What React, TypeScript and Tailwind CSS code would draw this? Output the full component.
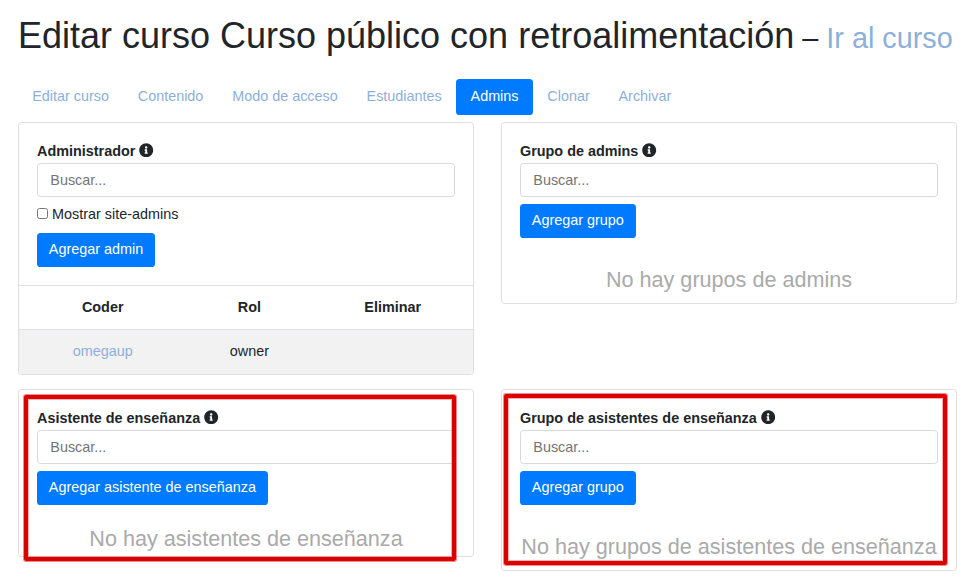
import type { ReactNode } from 'react';
import { FaInfoCircle } from 'react-icons/fa';

const tabs = ['Editar curso', 'Contenido', 'Modo de acceso', 'Estudiantes', 'Admins', 'Clonar', 'Archivar'];

function Card({ children, className = '' }: { children: ReactNode; className?: string }) {
  return (
    <section className={`relative rounded-[3.6px] border border-[#dfdfdf] bg-white ${className}`}>{children}</section>
  );
}

function SearchField({ label }: { label: string }) {
  return (
    <label className="block">
      <span className="flex h-[21.6px] items-center font-bold">
        {label}
        <FaInfoCircle className="relative -top-[1.6px] ml-1 size-[14.4px]" />
      </span>
      <input
        type="text"
        placeholder="Buscar..."
        className="block h-[34px] w-full rounded-[3.6px] border border-[#d9d9d9] bg-white px-[12.3px] placeholder:text-[#757575]"
      />
    </label>
  );
}

function AddButton({ children }: { children: ReactNode }) {
  return (
    <button type="button" className="h-[34px] rounded-[3.6px] bg-[#007bff] px-[11.8px] text-white">
      {children}
    </button>
  );
}

function EmptyNote({ children, className = '' }: { children: ReactNode; className?: string }) {
  return (
    <div className={`text-center text-[21.6px] leading-[26px] whitespace-nowrap text-[#aaaaaa] ${className}`}>
      {children}
    </div>
  );
}

export default function App() {
  return (
    <main
      className="h-[581px] w-[971px] overflow-hidden bg-white pt-[14px] pl-[18px] text-[14.4px] leading-[21.6px] text-[#212529]"
      style={{ fontFamily: '"Liberation Sans", Arial, sans-serif' }}
    >
      <h1 className="-ml-[0.1px] h-[65px] text-[36px] leading-[43px] whitespace-nowrap">
        Editar curso Curso público con retroalimentación
        <small className="text-[28.8px]">
          {' '}– <a href="#curso" className="text-[#8cb0d9]">Ir al curso</a>
        </small>
      </h1>
      <nav className="-ml-[0.2px] flex h-[43px]">
        {tabs.map((tab) => (
          <a
            key={tab}
            href="#tab"
            className={`h-9 rounded-[3.6px] px-[14.4px] pt-[7px] ${tab === 'Admins' ? 'bg-[#007bff] text-white' : 'text-[#8cb0d9]'}`}
          >
            {tab}
          </a>
        ))}
      </nav>
      <div className="grid grid-cols-[456px_456px] items-start gap-x-[27px] gap-y-[14px]">
        <Card className="h-[253px] overflow-hidden">
          <div className="px-[18px] pt-[18px]">
            <SearchField label="Administrador" />
            <label className="mt-[7px] flex h-[21.6px] items-center">
              <input type="checkbox" className="relative -top-[1.4px] mr-1 size-[11px]" />
              Mostrar site-admins
            </label>
            <div className="mt-[7.8px]">
              <AddButton>Agregar admin</AddButton>
            </div>
          </div>
          <table className="mt-[18px] w-full table-fixed border-collapse text-center">
            <colgroup>
              <col className="w-[167.4px]" />
              <col className="w-[126px]" />
              <col />
            </colgroup>
            <thead>
              <tr className="h-[44px] border-t border-[#dee2e6]">
                <th>Coder</th>
                <th>Rol</th>
                <th>Eliminar</th>
              </tr>
            </thead>
            <tbody>
              <tr className="h-[46px] border-t border-[#dee2e6] bg-[#f2f2f2]">
                <td className="pb-[2px]"><a href="#omegaup" className="text-[#8cb0d9]">omegaup</a></td>
                <td className="pb-[2px]">owner</td>
                <td />
              </tr>
            </tbody>
          </table>
        </Card>
        <Card className="h-[182px]">
          <div className="px-[18px] pt-[18px]">
            <SearchField label="Grupo de admins" />
            <div className="mt-[7.4px]">
              <AddButton>Agregar grupo</AddButton>
            </div>
            <EmptyNote className="mt-[28.6px]">No hay grupos de admins</EmptyNote>
          </div>
        </Card>
        <Card className="h-[168px]">
          <div className="px-[18px] pt-[18px]">
            <SearchField label="Asistente de enseñanza" />
            <div className="mt-[7.4px]">
              <AddButton>Agregar asistente de enseñanza</AddButton>
            </div>
            <EmptyNote className="mt-[20.6px]">No hay asistentes de enseñanza</EmptyNote>
          </div>
          <div className="pointer-events-none absolute top-[5px] left-[5px] h-[166px] w-[432px] rounded-[2px] border-4 border-[#db0000] shadow-[0_0_0_1px_rgba(219,0,0,0.45),inset_0_0_0_1px_rgba(219,0,0,0.3)]" />
        </Card>
        <Card className="h-[182px]">
          <div className="px-[18px] pt-[18px]">
            <SearchField label="Grupo de asistentes de enseñanza" />
            <div className="mt-[7.4px]">
              <AddButton>Agregar grupo</AddButton>
            </div>
            <EmptyNote className="mt-[28.6px]">No hay grupos de asistentes de enseñanza</EmptyNote>
          </div>
          <div className="pointer-events-none absolute top-[4px] left-[2px] h-[171px] w-[443px] rounded-[2px] border-4 border-[#db0000] shadow-[0_0_0_1px_rgba(219,0,0,0.45),inset_0_0_0_1px_rgba(219,0,0,0.3)]" />
        </Card>
      </div>
    </main>
  );
}
